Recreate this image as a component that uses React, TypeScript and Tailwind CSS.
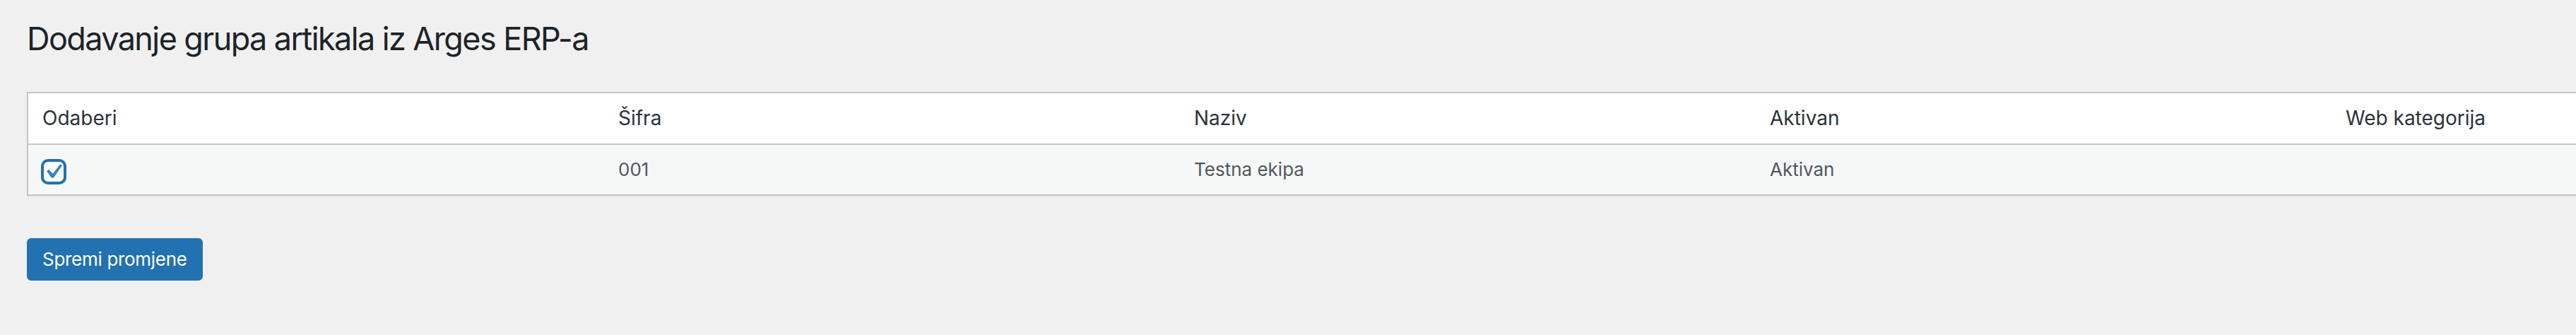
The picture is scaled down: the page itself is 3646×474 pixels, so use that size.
import React from "react";

const columns = ["Odaberi", "Šifra", "Naziv", "Aktivan", "Web kategorija"];

function CheckedBox() {
  return (
    <div className="relative h-[32px] w-[32px] rounded-[8px] border-2 border-[#2271b1] bg-white shadow-[0_0_0_2px_#2271b1]">
      <svg
        viewBox="0 0 20 20"
        className="absolute left-[-8px] top-[-7px] h-[42px] w-[42px]"
      >
        <path
          fill="#3582c4"
          d="M14.83 4.89l1.34.94-5.81 8.38H9.02L5.78 9.67l1.34-1.25 2.83 2.83z"
        />
      </svg>
    </div>
  );
}

export default function App() {
  return (
    <div className="h-[474px] w-full overflow-hidden bg-[#f0f0f1] pl-[38px] pt-[25px] font-['Inter','Liberation_Sans',sans-serif]">
      <h1 className="text-[45px] font-normal leading-[60px] tracking-[-1.6px] text-[#1d2327]">
        Dodavanje grupa artikala iz Arges ERP-a
      </h1>

      {/* Table */}
      <table className="mt-[45px] w-[4079px] table-fixed border-separate border-spacing-0 border-2 border-[#c3c4c7] bg-white shadow-[0_2px_2px_rgba(0,0,0,0.04)]">
        <thead>
          <tr>
            {columns.map((c) => (
              <th
                key={c}
                className="w-[815px] border-b-2 border-[#c3c4c7] px-[20px] py-[16px] text-left align-top text-[28px] font-normal leading-[39px] text-[#2c3338]"
              >
                {c}
              </th>
            ))}
          </tr>
        </thead>
        <tbody>
          <tr className="bg-[#f6f7f7]">
            <td className="px-[20px] pb-[16px] pt-[22px] align-top">
              <CheckedBox />
            </td>
            <td className="px-[20px] py-[16px] align-top text-[26px] leading-[38px] text-[#50575e]">
              001
            </td>
            <td className="px-[20px] py-[16px] align-top text-[26px] leading-[38px] text-[#50575e]">
              Testna ekipa
            </td>
            <td className="px-[20px] py-[16px] align-top text-[26px] leading-[38px] text-[#50575e]">
              Aktivan
            </td>
            <td className="px-[20px] py-[16px] align-top text-[26px] leading-[38px] text-[#50575e]"></td>
          </tr>
        </tbody>
      </table>

      <button className="mt-[60px] flex h-[60px] items-center rounded-[6px] border-2 border-[#2271b1] bg-[#2271b1] px-[20px] text-[26px] leading-[56px] tracking-[-0.3px] text-white">
        Spremi promjene
      </button>
    </div>
  );
}
